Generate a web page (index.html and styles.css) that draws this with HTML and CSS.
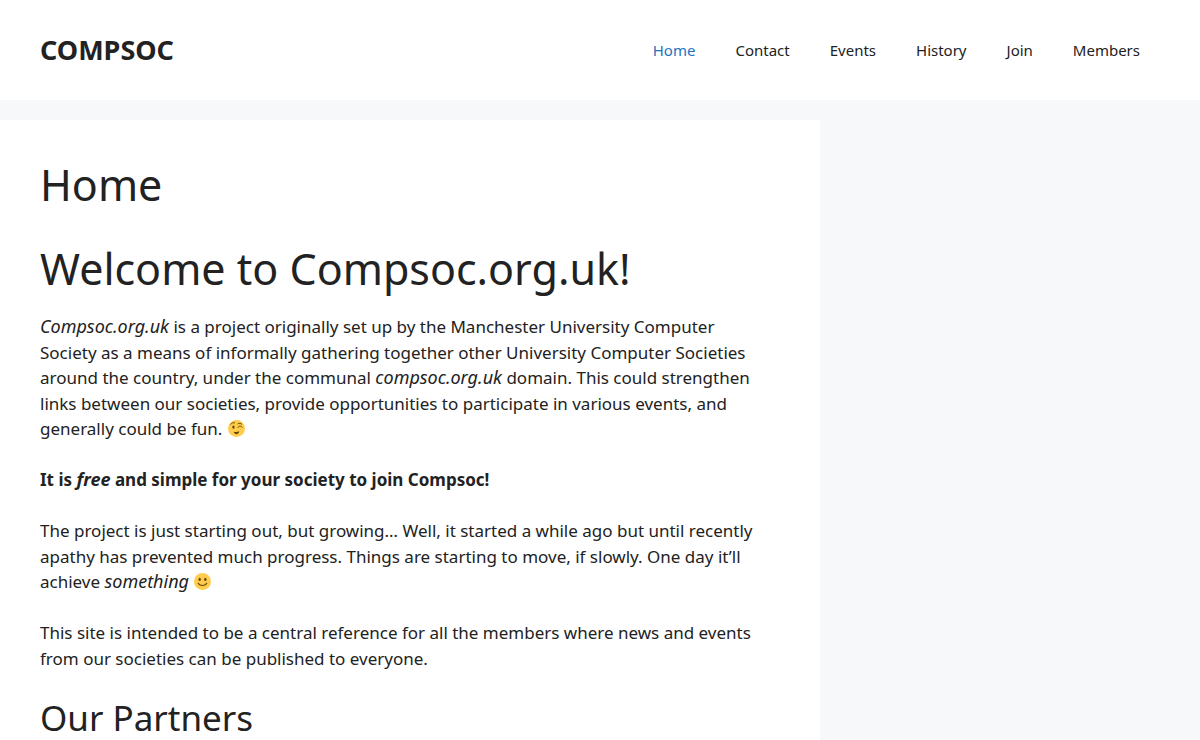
FILE: index.html
```html
<!DOCTYPE html>
<html lang="en">
<head>
    <meta charset="UTF-8">
    <meta name="viewport" content="width=device-width, initial-scale=1">
    <title>COMPSOC</title>
    <link rel="stylesheet" href="styles.css">
</head>
<body>
<header class="site-header">
    <div class="inside-header">
        <a class="site-title" href="#">COMPSOC</a>
        <nav class="main-nav">
            <ul>
                <li class="current"><a href="#">Home</a></li>
                <li><a href="#contact">Contact</a></li>
                <li><a href="#events">Events</a></li>
                <li><a href="#history">History</a></li>
                <li><a href="#join">Join</a></li>
                <li><a href="#members">Members</a></li>
            </ul>
        </nav>
    </div>
</header>

<div class="site-content">
    <main class="content-area">
        <article class="inside-article">
            <h1>Home</h1>
            <div class="entry-content">
                <h1>Welcome to Compsoc.org.uk!</h1>
                <p><em>Compsoc.org.uk</em> is a project originally set up by the Manchester University Computer<br>
                    Society as a means of informally gathering together other University Computer Societies<br>
                    around the country, under the communal <em>compsoc.org.uk</em> domain. This could strengthen<br>
                    links between our societies, provide opportunities to participate in various events, and<br>
                    generally could be fun.
                    <svg class="emoji" viewBox="0 0 36 36" role="img" aria-label="winking face">
                        <circle cx="18" cy="18" r="18" fill="#ffcc4d"/>
                        <ellipse cx="11.5" cy="15" rx="2.5" ry="3.5" fill="#664500"/>
                        <path d="M6 9c2-3 5-4 8-3M21 8c3-2 6-1 8 1M21 16c2-4 6-4 9-1" fill="none" stroke="#664500" stroke-width="2" stroke-linecap="round"/>
                        <path d="M12 25c4 1 8 1 12-1-1 4-3 6-6 6s-5-2-6-5z" fill="#664500"/>
                    </svg>
                </p>
                <p><strong>It is <em>free</em> and simple for your society to join Compsoc!</strong></p>
                <p>The project is just starting out, but growing… Well, it started a while ago but until recently<br>
                    apathy has prevented much progress. Things are starting to move, if slowly. One day it’ll<br>
                    achieve <em>something</em>
                    <svg class="emoji" viewBox="0 0 36 36" role="img" aria-label="smiling face">
                        <circle cx="18" cy="18" r="18" fill="#ffcc4d"/>
                        <ellipse cx="12" cy="13.5" rx="2.5" ry="3.5" fill="#664500"/>
                        <ellipse cx="24" cy="13.5" rx="2.5" ry="3.5" fill="#664500"/>
                        <path d="M9 22c4 6 14 6 18 0" fill="none" stroke="#664500" stroke-width="2.5" stroke-linecap="round"/>
                    </svg>
                </p>
                <p>This site is intended to be a central reference for all the members where news and events<br>
                    from our societies can be published to everyone.</p>
                <h2>Our Partners</h2>
            </div>
        </article>
    </main>
</div>
</body>
</html>
```

FILE: styles.css
```css
body {
    margin: 0;
    background-color: #f7f8f9;
    color: #222222;
    font-family: "Noto Sans", "Open Sans", sans-serif;
    font-size: 17px;
    line-height: 1.5;
}

a {
    color: #222222;
    text-decoration: none;
}

h1,
h2 {
    margin: 0 0 20px;
    font-weight: 400;
}

h1 {
    font-size: 43px;
    line-height: 50px;
}

h2 {
    font-size: 35px;
    line-height: 42px;
}

p {
    margin: 0 0 1.5em;
}

em {
    font-size: 18px;
    line-height: 1;
}

.site-header {
    background-color: #ffffff;
}

.inside-header {
    display: flex;
    align-items: center;
    justify-content: space-between;
    max-width: 1200px;
    margin: 0 auto;
    padding: 20px 40px;
    box-sizing: border-box;
}

.site-title {
    font-size: 27px;
    font-weight: bold;
}

.main-nav ul {
    display: flex;
    margin: 0;
    padding: 0;
    list-style: none;
}

.main-nav a {
    display: block;
    padding: 0 20px;
    font-size: 15px;
    line-height: 60px;
}

.main-nav .current a,
.main-nav a:hover {
    color: #1e73be;
}

.site-content {
    max-width: 1200px;
    margin: 0 auto;
}

.content-area {
    width: 70%;
}

.inside-article {
    margin: 20px 20px 20px 0;
    padding: 40px;
    background-color: #ffffff;
}

.inside-article > h1 {
    margin: 0;
}

.entry-content {
    margin-top: 34px;
}

.emoji {
    width: 1em;
    height: 1em;
    margin-left: 1px;
    vertical-align: -2px;
}
```
